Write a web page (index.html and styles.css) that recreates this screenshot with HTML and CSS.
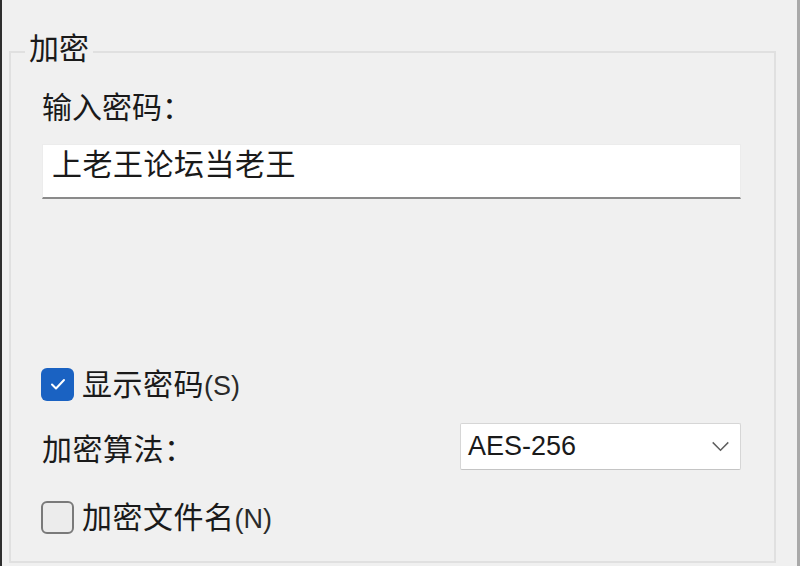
FILE: index.html
```html
<!DOCTYPE html>
<html lang="zh-CN">
<head>
<meta charset="utf-8">
<link rel="stylesheet" href="styles.css">
</head>
<body>
<div class="window">
  <div class="group">
    <div class="legend">加密</div>
    <div class="label">输入密码：</div>
    <div class="input">上老王论坛当老王</div>
    <label class="check first">
      <span class="box checked"><svg viewBox="0 0 32 32" width="32" height="32"><path d="M10 16.5 L14 20.5 L22 12" fill="none" stroke="#fff" stroke-width="2" stroke-linecap="round" stroke-linejoin="round"/></svg></span>
      <span class="text">显示密码<span class="latin">(S)</span></span>
    </label>
    <div class="row">
      <span class="text">加密算法：</span>
      <div class="select">
        <span class="value">AES-256</span>
        <svg class="chev" viewBox="0 0 20 12" width="19" height="11"><path d="M1.5 1.5 L10 10 L18.5 1.5" fill="none" stroke="#5f5f5f" stroke-width="1.6"/></svg>
      </div>
    </div>
    <label class="check last">
      <span class="box"></span>
      <span class="text">加密文件名<span class="latin">(N)</span></span>
    </label>
  </div>
</div>
</body>
</html>
```
FILE: styles.css
```css
html, body {
  margin: 0;
  padding: 0;
  background: #f0f0f0;
}
body {
  width: 800px;
  height: 566px;
  overflow: hidden;
  font-family: "Noto Sans CJK SC", "Noto Sans", sans-serif;
  font-size: 30px;
  color: #1a1a1a;
}
.window {
  box-sizing: border-box;
  width: 800px;
  height: 566px;
  border-left: 2px solid #2e2e2e;
  border-right: 3px solid #a9a9a9;
  padding: 51px 21px 3px 7px;
}
.group {
  position: relative;
  box-sizing: border-box;
  height: 512px;
  border: 2px solid #e0e0e0;
  padding: 0 33px 0 31px;
  display: flex;
  flex-direction: column;
}
.legend {
  position: absolute;
  left: 14px;
  top: -27px;
  padding: 0 4px;
  line-height: 40px;
  background: #f0f0f0;
}
.label {
  margin-top: 32px;
  line-height: 40px;
}
.input {
  box-sizing: border-box;
  height: 55px;
  margin-top: 19px;
  background: #fff;
  border: 1px solid #ececec;
  border-bottom: 2px solid #8a8a8a;
  padding-left: 9px;
  line-height: 34px;
  letter-spacing: 0.5px;
}
.check {
  display: flex;
  align-items: center;
  height: 40px;
  gap: 8px;
}
.check.first {
  margin-top: 165px;
}
.check.last {
  margin-top: 27px;
}
.box {
  box-sizing: border-box;
  width: 33px;
  height: 33px;
  margin-left: -1px;
  border: 2px solid #7a7a7a;
  border-radius: 6px;
  background: #ececec;
  display: flex;
  align-items: center;
  justify-content: center;
}
.box.checked {
  border: none;
  background: #1a62c2;
}
.box svg {
  display: block;
}
.text {
  line-height: 40px;
  letter-spacing: 0.5px;
}
.latin {
  font-family: "Liberation Sans", "Noto Sans", sans-serif;
  font-size: 27px;
  letter-spacing: 0;
  color: #2a2a2a;
}
.row {
  display: flex;
  align-items: center;
  justify-content: space-between;
  margin-top: 19px;
  height: 47px;
}
.select {
  box-sizing: border-box;
  width: 281px;
  height: 47px;
  background: #fff;
  border: 1px solid #d6d6d6;
  border-bottom-color: #c4c4c4;
  border-radius: 2px;
  display: flex;
  align-items: center;
  justify-content: space-between;
  padding: 0 10px 0 7px;
}
.value {
  font-family: "Liberation Sans", "Noto Sans", sans-serif;
  font-size: 27px;
  color: #1a1a1a;
}
.chev {
  display: block;
  margin-top: 0;
}
```
